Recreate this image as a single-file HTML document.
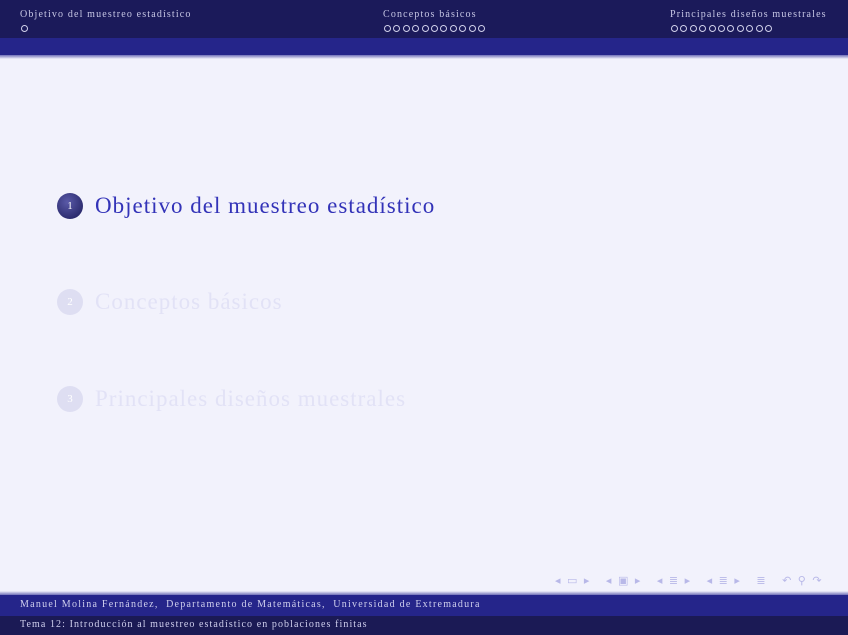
<!DOCTYPE html>
<html><head><meta charset="utf-8"><style>
*{margin:0;padding:0;box-sizing:border-box}
body{width:848px;height:635px;background:#f2f2fc;position:relative;overflow:hidden;font-family:"Liberation Serif",serif}
.hd{position:absolute;left:0;top:0;width:848px;height:38px;background:#1b1a5a;color:#c8c8e6;font-size:10px}
.band{position:absolute;left:0;top:38px;width:848px;height:17px;background:#25258a}
.sh{position:absolute;left:0;top:55px;width:848px;height:4px;background:linear-gradient(#7070b8,#f2f2fc)}
.sec{position:absolute;top:9px;letter-spacing:1.15px;white-space:nowrap}
.dots{position:absolute;top:25px;height:8px;display:flex;gap:2.4px}
.dots i{display:block;width:7px;height:7px;border:1.3px solid #d0d0ea;border-radius:50%}
.item{position:absolute;left:57px;font-size:23px;letter-spacing:1px;display:flex;align-items:center}
.ball{width:26px;height:26px;border-radius:50%;margin-right:12px;display:flex;align-items:center;justify-content:center;font-size:11px;color:#fff;letter-spacing:0}
.nav{position:absolute;top:574px;left:555px;font-size:11px;color:#b8b8e8;letter-spacing:6.5px;font-family:"DejaVu Sans",sans-serif;white-space:nowrap}
.fs{position:absolute;left:0;top:591px;width:848px;height:4px;background:linear-gradient(#f2f2fc,#7070b8)}
.f1{position:absolute;left:0;top:595px;width:848px;height:21px;background:#25258a;color:#d0d0ee;font-size:10px;padding:4px 0 0 20px;letter-spacing:1.25px;white-space:nowrap}
.f2{position:absolute;left:0;top:616px;width:848px;height:19px;background:#1b1a55;color:#d0d0ee;font-size:10px;padding:3px 0 0 20px;letter-spacing:1.08px;white-space:nowrap}
</style></head><body>
<div class="hd">
<div class="sec" style="left:20px">Objetivo del muestreo estadístico</div>
<div class="dots" style="left:21px"><i></i></div>
<div class="sec" style="left:383px">Conceptos básicos</div>
<div class="dots" style="left:384px"><i></i><i></i><i></i><i></i><i></i><i></i><i></i><i></i><i></i><i></i><i></i></div>
<div class="sec" style="left:670px">Principales diseños muestrales</div>
<div class="dots" style="left:671px"><i></i><i></i><i></i><i></i><i></i><i></i><i></i><i></i><i></i><i></i><i></i></div>
</div>
<div class="band"></div><div class="sh"></div>
<div class="item" style="top:193px;color:#3333b8"><div class="ball" style="background:radial-gradient(circle at 40% 35%,#5a5aa8,#1b1a5a)">1</div>Objetivo del muestreo estadístico</div>
<div class="item" style="top:289px;color:#e2e2f6"><div class="ball" style="background:#dedef2">2</div>Conceptos básicos</div>
<div class="item" style="top:386px;color:#e2e2f6"><div class="ball" style="background:#dedef2">3</div>Principales diseños muestrales</div>
<div class="nav">◂▭▸ ◂▣▸ ◂≣▸ ◂≣▸ ≣ ↶⚲↷</div>
<div class="fs"></div>
<div class="f1">Manuel Molina Fernández, &nbsp;Departamento de Matemáticas, &nbsp;Universidad de Extremadura</div>
<div class="f2">Tema 12: Introducción al muestreo estadístico en poblaciones finitas</div>
</body></html>
